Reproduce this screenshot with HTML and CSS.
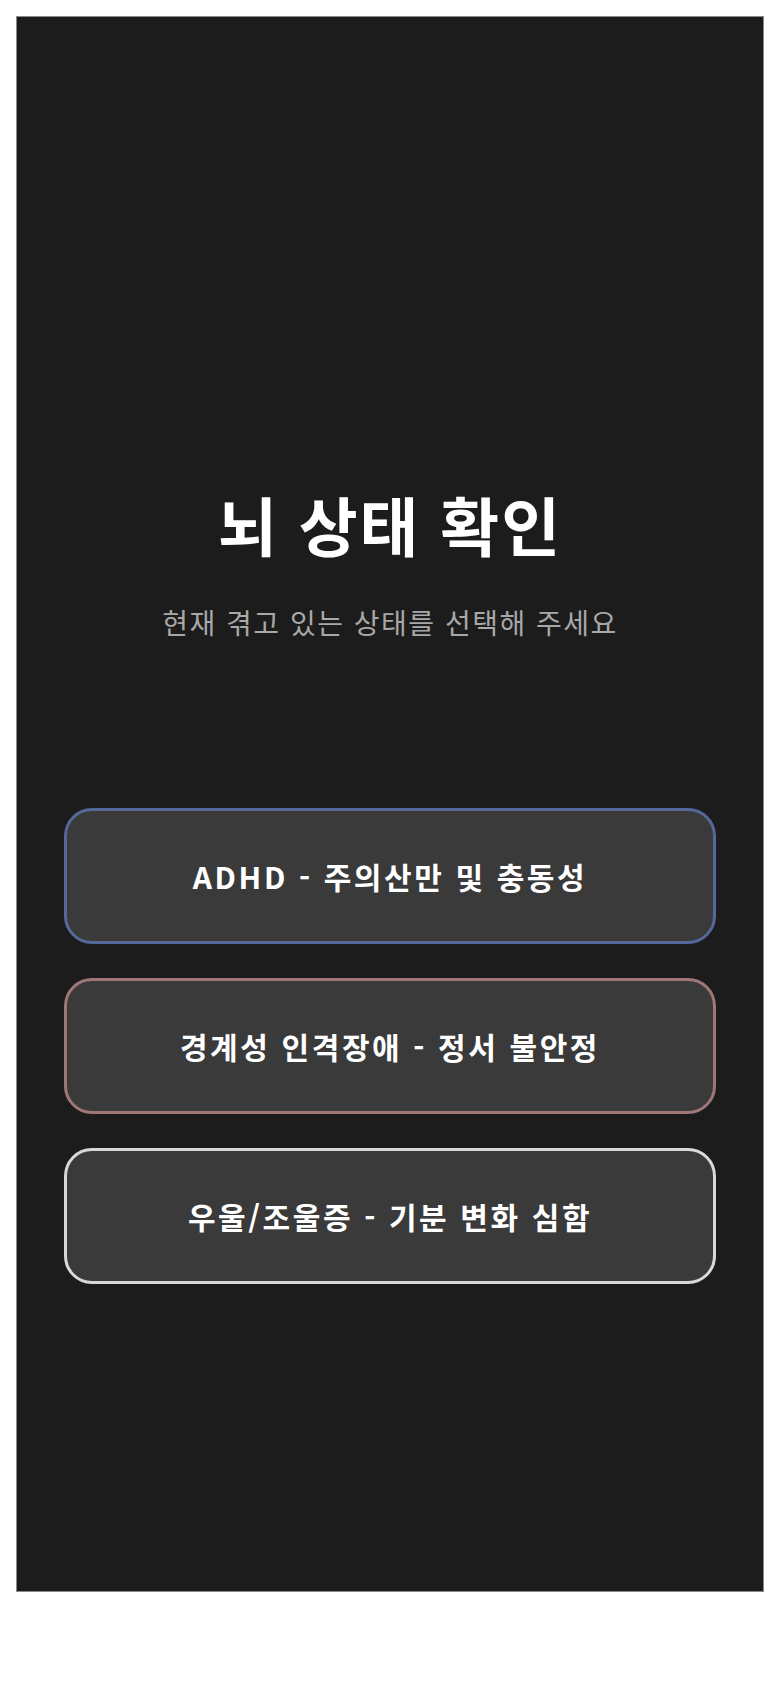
FILE: index.html
```html
<!DOCTYPE html>
<html lang="ko">
<head>
    <meta charset="UTF-8">
    <meta name="viewport" content="width=device-width, initial-scale=1.0">
    <title>뇌 상태 확인</title>
    <link rel="stylesheet" href="styles.css">
</head>
<body>
    <div class="screen">
        <h1 class="title">뇌 상태 확인</h1>
        <p class="subtitle">현재 겪고 있는 상태를 선택해 주세요</p>
        <div class="choices">
            <button class="choice choice-adhd">ADHD - 주의산만 및 충동성</button>
            <button class="choice choice-bpd">경계성 인격장애 - 정서 불안정</button>
            <button class="choice choice-mood">우울/조울증 - 기분 변화 심함</button>
        </div>
    </div>
</body>
</html>
```

FILE: styles.css
```css
body {
    margin: 0;
    padding: 16px;
    background: #fff;
    font-family: 'Noto Sans CJK KR', 'Noto Sans', sans-serif;
}
.screen {
    box-sizing: border-box;
    height: 1576px;
    background-color: #1c1c1c;
    border: 1px solid #8a8a8a;
    padding: 468px 47px 0;
    text-align: center;
}
.title {
    margin: 0;
    font-size: 64px;
    line-height: 1.2;
    font-weight: 700;
    letter-spacing: 2px;
    color: #fff;
}
.subtitle {
    margin: 41px 0 0;
    font-size: 28px;
    line-height: 1.4;
    letter-spacing: 1.5px;
    color: #a8a8a8;
}
.choices {
    display: flex;
    flex-direction: column;
    gap: 34px;
    margin-top: 166px;
}
.choice {
    height: 136px;
    width: 100%;
    background-color: #3a3a3a;
    border: 3px solid #ddd;
    border-radius: 28px;
    color: #fff;
    font-family: inherit;
    font-size: 30px;
    font-weight: 700;
    letter-spacing: 2.6px;
    cursor: pointer;
}
.choice-adhd {
    border-color: #56689a;
}
.choice-bpd {
    border-color: #a07676;
}
.choice-mood {
    border-color: #d9d9d9;
}
```
